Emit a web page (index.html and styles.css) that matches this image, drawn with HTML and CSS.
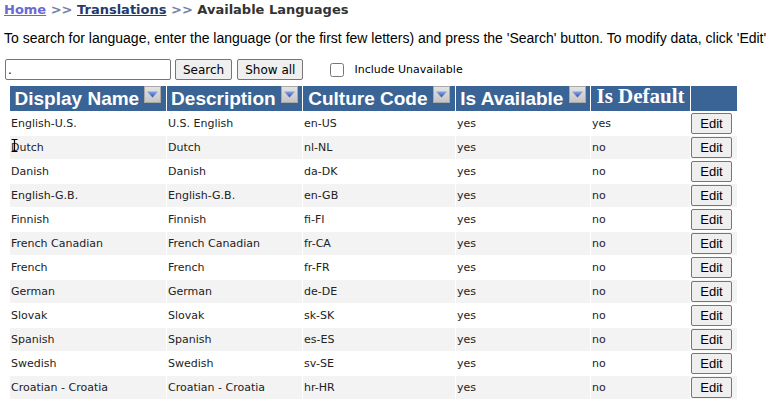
FILE: index.html
```html
<!DOCTYPE html>
<html>
<head>
<meta charset="utf-8">
<link rel="stylesheet" href="styles.css">
</head>
<body>
<div class="crumbs">
  <a class="home" href="#">Home</a><span class="sep"> &gt;&gt; </span><a class="trans" href="#">Translations</a><span class="sep"> &gt;&gt; </span><span class="current">Available Languages</span>
</div>
<p class="intro">To search for language, enter the language (or the first few letters) and press the 'Search' button. To modify data, click 'Edit'</p>
<div class="controls">
  <input class="query" type="text" value=".">
  <button class="btn">Search</button>
  <button class="btn">Show all</button>
  <label class="incl"><input type="checkbox" class="chk"><span>Include Unavailable</span></label>
</div>
<div class="tablewrap">
<table class="grid">
  <colgroup>
    <col class="c1"><col class="c2"><col class="c3"><col class="c4"><col class="c5"><col class="c6">
  </colgroup>
  <thead>
    <tr>
      <th>Display Name <svg class="sort" viewBox="0 0 17 17" width="17" height="17"><defs><linearGradient id="gb" x1="0" y1="0" x2="0" y2="1"><stop offset="0" stop-color="#e4e4e4"/><stop offset="1" stop-color="#c4c4c4"/></linearGradient><linearGradient id="gt" x1="0" y1="0" x2="0" y2="1"><stop offset="0" stop-color="#8aa6e6"/><stop offset="1" stop-color="#2c4fb0"/></linearGradient></defs><rect x="0.5" y="0.5" width="16" height="16" fill="url(#gb)" stroke="#a9a9a9"/><path d="M3 5.5 H14 L8.5 11.5 Z" fill="url(#gt)"/></svg></th>
      <th>Description <svg class="sort" viewBox="0 0 17 17" width="17" height="17"><rect x="0.5" y="0.5" width="16" height="16" fill="url(#gb)" stroke="#a9a9a9"/><path d="M3 5.5 H14 L8.5 11.5 Z" fill="url(#gt)"/></svg></th>
      <th>Culture Code <svg class="sort" viewBox="0 0 17 17" width="17" height="17"><rect x="0.5" y="0.5" width="16" height="16" fill="url(#gb)" stroke="#a9a9a9"/><path d="M3 5.5 H14 L8.5 11.5 Z" fill="url(#gt)"/></svg></th>
      <th>Is Available <svg class="sort" viewBox="0 0 17 17" width="17" height="17"><rect x="0.5" y="0.5" width="16" height="16" fill="url(#gb)" stroke="#a9a9a9"/><path d="M3 5.5 H14 L8.5 11.5 Z" fill="url(#gt)"/></svg></th>
      <th class="serif">Is Default</th>
      <th></th>
    </tr>
  </thead>
  <tbody>
    <tr><td>English-U.S.</td><td>U.S. English</td><td>en-US</td><td>yes</td><td>yes</td><td class="act"><button class="edit">Edit</button></td></tr>
    <tr><td class="cursorcell"><svg class="ibeam" viewBox="0 0 7 13" width="7" height="13"><path d="M0.5 0.5 H6.5 M3.5 0.5 V12.5 M0.5 12.5 H6.5" stroke="#000" stroke-width="1.2" fill="none"/></svg>Dutch</td><td>Dutch</td><td>nl-NL</td><td>yes</td><td>no</td><td class="act"><button class="edit">Edit</button></td></tr>
    <tr><td>Danish</td><td>Danish</td><td>da-DK</td><td>yes</td><td>no</td><td class="act"><button class="edit">Edit</button></td></tr>
    <tr><td>English-G.B.</td><td>English-G.B.</td><td>en-GB</td><td>yes</td><td>no</td><td class="act"><button class="edit">Edit</button></td></tr>
    <tr><td>Finnish</td><td>Finnish</td><td>fi-FI</td><td>yes</td><td>no</td><td class="act"><button class="edit">Edit</button></td></tr>
    <tr><td>French Canadian</td><td>French Canadian</td><td>fr-CA</td><td>yes</td><td>no</td><td class="act"><button class="edit">Edit</button></td></tr>
    <tr><td>French</td><td>French</td><td>fr-FR</td><td>yes</td><td>no</td><td class="act"><button class="edit">Edit</button></td></tr>
    <tr><td>German</td><td>German</td><td>de-DE</td><td>yes</td><td>no</td><td class="act"><button class="edit">Edit</button></td></tr>
    <tr><td>Slovak</td><td>Slovak</td><td>sk-SK</td><td>yes</td><td>no</td><td class="act"><button class="edit">Edit</button></td></tr>
    <tr><td>Spanish</td><td>Spanish</td><td>es-ES</td><td>yes</td><td>no</td><td class="act"><button class="edit">Edit</button></td></tr>
    <tr><td>Swedish</td><td>Swedish</td><td>sv-SE</td><td>yes</td><td>no</td><td class="act"><button class="edit">Edit</button></td></tr>
    <tr><td>Croatian - Croatia</td><td>Croatian - Croatia</td><td>hr-HR</td><td>yes</td><td>no</td><td class="act"><button class="edit">Edit</button></td></tr>
  </tbody>
</table>
</div>
</body>
</html>
```
FILE: styles.css
```css
html, body {
  margin: 0;
  padding: 0;
  background: #ffffff;
}
body {
  padding: 0 4px;
  font-family: "DejaVu Sans", Verdana, sans-serif;
  color: #333333;
  overflow: hidden;
}
.crumbs {
  height: 20px;
  line-height: 20px;
  font-weight: bold;
  font-size: 13px;
  white-space: nowrap;
}
.crumbs a {
  text-decoration: underline;
}
.home {
  color: #6a6ad2;
}
.trans {
  color: #243a6c;
}
.sep {
  color: #7482a8;
}
.current {
  color: #333333;
}
.intro {
  margin: 9px 0 0 0;
  font-family: "Liberation Sans", Arial, sans-serif;
  font-size: 14px;
  line-height: 18px;
  color: #000000;
  white-space: nowrap;
}
.controls {
  display: flex;
  align-items: center;
  margin-top: 12px;
  height: 21px;
}
.query {
  box-sizing: border-box;
  width: 166px;
  height: 21px;
  margin: 0 0 0 1px;
  padding: 1px 2px;
  border: 1px solid #767676;
  border-radius: 2px;
  font-family: "DejaVu Sans", Verdana, sans-serif;
  font-size: 12px;
}
.btn {
  box-sizing: border-box;
  height: 21px;
  margin: 0 0 0 4px;
  padding: 0 7px;
  border: 1px solid #767676;
  border-radius: 2px;
  background: #efefef;
  color: #000;
  font-family: "DejaVu Sans", Verdana, sans-serif;
  font-size: 12px;
}
.btn + .btn {
  margin-left: 5px;
}
.incl {
  display: flex;
  align-items: center;
  margin-left: 27px;
  font-size: 11px;
  color: #000;
}
.chk {
  width: 14px;
  height: 14px;
  margin: 0 10px 0 0;
}
.tablewrap {
  margin-top: 5px;
  margin-left: 5px;
}
.grid {
  border-collapse: separate;
  border-spacing: 1px 1px;
  table-layout: fixed;
  width: 729px;
}
.c1 { width: 156px; }
.c2 { width: 135px; }
.c3 { width: 152px; }
.c4 { width: 134px; }
.c5 { width: 99px; }
.c6 { width: 46px; }
.grid th {
  background: #3a6496;
  color: #ffffff;
  font-family: "Liberation Sans", Arial, sans-serif;
  font-weight: bold;
  font-size: 19px;
  height: 25px;
  line-height: 25px;
  padding: 0;
  text-align: center;
  white-space: nowrap;
  overflow: hidden;
}
.grid th.serif {
  font-family: "Liberation Serif", "Times New Roman", serif;
  font-size: 21px;
  vertical-align: top;
  line-height: 21px;
  overflow: visible;
}
.sort {
  vertical-align: top;
  margin-top: 0;
}
.grid td {
  height: 23px;
  padding: 0 1px 0 1px;
  font-size: 11px;
  color: #222222;
  white-space: nowrap;
  overflow: hidden;
}
.grid tbody tr:nth-child(even) td {
  background: #f3f3f3;
}
.grid td.act {
  padding: 0;
}
.edit {
  box-sizing: border-box;
  width: 41px;
  height: 21px;
  padding: 0;
  margin: 0;
  border: 1px solid #767676;
  border-radius: 2px;
  background: #efefef;
  color: #000;
  font-family: "Liberation Sans", Arial, sans-serif;
  font-size: 13px;
  vertical-align: middle;
}
.cursorcell {
  position: relative;
}
.ibeam {
  position: absolute;
  left: 1px;
  top: 3px;
}
```
